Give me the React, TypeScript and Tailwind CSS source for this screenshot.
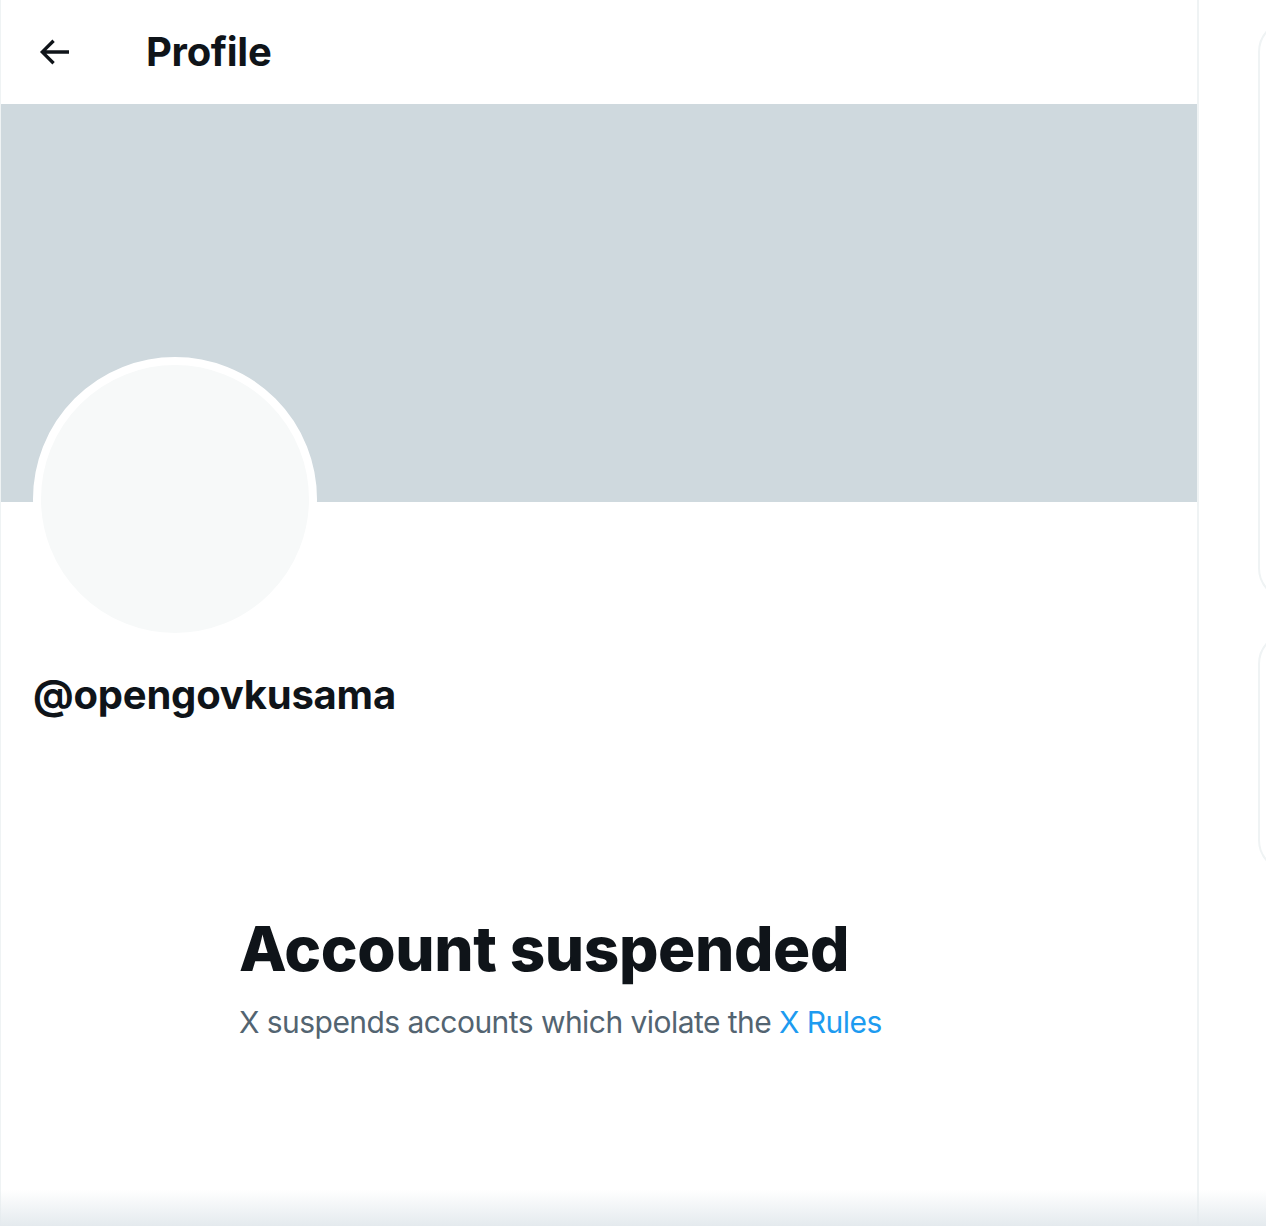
export default function App() {
  return (
    <div
      className="relative flex h-[1226px] w-[1266px] overflow-hidden bg-white"
      style={{ fontFamily: "Inter, 'Liberation Sans', sans-serif" }}
    >
      {/* main column */}
      <main className="flex w-[1199px] shrink-0 flex-col border-l border-r-2 border-[#eff3f4]">
        <header className="flex h-[104px] items-center">
          <svg
            viewBox="0 0 24 24"
            className="ml-[33px] h-[40px] w-[40px] fill-[#0f1419]"
            aria-hidden="true"
          >
            <path d="M7.414 13l5.043 5.04-1.414 1.42L3.586 12l7.457-7.46 1.414 1.42L7.414 11H21v2H7.414z" />
          </svg>
          <h1 className="ml-[72px] text-[40px] font-bold tracking-[-0.3px] text-[#0f1419]">
            Profile
          </h1>
        </header>

        <div className="h-[398px] bg-[#cfd9de]" />

        <div className="px-[32px]">
          <div className="-mt-[145px] h-[284px] w-[284px] rounded-full border-[8px] border-white bg-[#f7f9f9]" />
          <div className="mt-[30px] text-[40px] font-bold leading-[48px] tracking-[-0.2px] text-[#0f1419]">
            @opengovkusama
          </div>
        </div>

        <section className="ml-[238px] mt-[194px]">
          <h2 className="text-[62px] font-extrabold leading-[72px] tracking-[-0.4px] text-[#0f1419]">
            Account suspended
          </h2>
          <p className="mt-[17px] text-[30px] leading-[40px] tracking-[-0.55px] text-[#536471]">
            X suspends accounts which violate the{" "}
            <a className="text-[#1d9bf0]">X Rules</a>
          </p>
        </section>
      </main>

      {/* right sidebar */}
      <aside className="flex flex-1 flex-col gap-[32px] pl-[59px] pt-[20px]">
        <div className="h-[580px] w-[300px] rounded-[32px] border-2 border-[#eff3f4]" />
        <div className="h-[240px] w-[300px] rounded-[32px] border-2 border-[#eff3f4]" />
      </aside>

      {/* bottom shade */}
      <div className="pointer-events-none absolute inset-x-0 bottom-0 h-[36px] bg-gradient-to-b from-white/0 to-[#e4eaee]" />
    </div>
  );
}
